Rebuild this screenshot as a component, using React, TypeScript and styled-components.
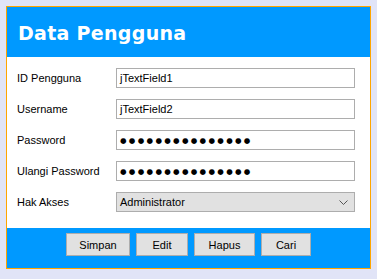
import React from "react";
import styled, { createGlobalStyle } from "styled-components";

const GlobalStyle = createGlobalStyle`
  html, body {
    margin: 0;
    padding: 0;
    background: #e1e4f7;
  }
  body {
    font-family: "Liberation Sans", Arial, sans-serif;
  }
`;

const Page = styled.div`
  padding: 6px;
  width: 377px;
  height: 279px;
  box-sizing: border-box;
`;

const Frame = styled.div`
  width: 365px;
  height: 263px;
  box-sizing: border-box;
  border: 1px solid #ffa500;
  display: flex;
  flex-direction: column;
  background: #fff;
`;

const Header = styled.div`
  height: 50px;
  background: #0099ff;
  display: flex;
  align-items: center;
  padding-left: 11px;
  padding-top: 2px;
  box-sizing: border-box;
`;

const Title = styled.h1`
  margin: 0;
  color: #fff;
  font-family: "DejaVu Sans", Verdana, sans-serif;
  font-weight: 700;
  font-size: 19px;
  letter-spacing: 0.3px;
`;

const Form = styled.div`
  flex: 1;
  display: grid;
  grid-template-columns: 99px 239px;
  row-gap: 11px;
  padding: 11px 0 0 10px;
  align-content: start;
`;

const Label = styled.label`
  font-size: 11px;
  color: #000;
  display: flex;
  align-items: center;
  height: 20px;
`;

const Field = styled.div`
  height: 20px;
  box-sizing: border-box;
  border: 1px solid #adadad;
  background: #fff;
  display: flex;
  align-items: center;
  padding-left: 3px;
  font-size: 11px;
  color: #000;
`;

const Dots = styled.span`
  font-family: "DejaVu Sans", sans-serif;
  font-size: 7.5px;
  letter-spacing: 2.3px;
  padding-top: 1px;
`;

const Combo = styled(Field)`
  background: #e1e1e1;
  justify-content: space-between;
  padding-right: 6px;
`;

const Footer = styled.div`
  height: 40px;
  background: #0099ff;
  display: flex;
  justify-content: center;
  align-items: flex-start;
  gap: 6px;
  padding-top: 5px;
  box-sizing: border-box;
`;

const Button = styled.button<{ $w: number }>`
  width: ${(p) => p.$w}px;
  height: 23px;
  box-sizing: border-box;
  border: 1px solid #adadad;
  background: #e1e1e1;
  font-family: "Liberation Sans", Arial, sans-serif;
  font-size: 11px;
  color: #000;
  padding: 0;
  cursor: pointer;
`;

const Chevron = () => (
  <svg width="9" height="5" viewBox="0 0 9 5">
    <path d="M0.5 0.5 L4.5 4.5 L8.5 0.5" fill="none" stroke="#555" strokeWidth="1" />
  </svg>
);

const dots = "●".repeat(15);

export default function App() {
  return (
    <Page>
      <GlobalStyle />
      <Frame>
        <Header>
          <Title>Data Pengguna</Title>
        </Header>
        <Form>
          <Label>ID Pengguna</Label>
          <Field>jTextField1</Field>
          <Label>Username</Label>
          <Field>jTextField2</Field>
          <Label>Password</Label>
          <Field>
            <Dots>{dots}</Dots>
          </Field>
          <Label>Ulangi Password</Label>
          <Field>
            <Dots>{dots}</Dots>
          </Field>
          <Label>Hak Akses</Label>
          <Combo>
            <span>Administrator</span>
            <Chevron />
          </Combo>
        </Form>
        <Footer>
          <Button $w={64}>Simpan</Button>
          <Button $w={52}>Edit</Button>
          <Button $w={61}>Hapus</Button>
          <Button $w={50}>Cari</Button>
        </Footer>
      </Frame>
    </Page>
  );
}
